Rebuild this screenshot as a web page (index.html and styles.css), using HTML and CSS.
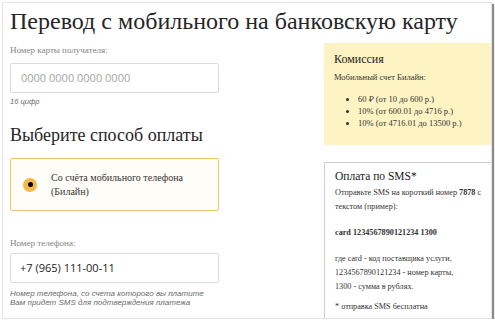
FILE: index.html
```html
<!DOCTYPE html>
<html lang="ru">
<head>
  <meta charset="utf-8">
  <title>Перевод с мобильного на банковскую карту</title>
  <link rel="stylesheet" href="styles.css">
</head>
<body>

<div class="frame">
  <h1 class="title">Перевод с мобильного на банковскую карту</h1>

  <div class="layout">
    <div class="form">
      <label class="field-label">Номер карты получателя:</label>
      <div class="input placeholder">0000 0000 0000 0000</div>
      <p class="hint">16 цифр</p>

      <h2 class="subtitle">Выберите способ оплаты</h2>
      <div class="option">
        <span class="radio"></span>
        <span class="option-text">Со счёта мобильного телефона<br>(Билайн)</span>
      </div>

      <label class="field-label phone-label">Номер телефона:</label>
      <div class="input phone">+7 (965) 111-00-11</div>
      <p class="hint phone-hint">Номер телефона, со счета которого вы платите<br>Вам придет SMS для подтверждения платежа</p>
    </div>

    <div class="side">
      <div class="box commission">
        <h3>Комиссия</h3>
        <p>Мобильный счет Билайн:</p>
        <ul>
          <li>60 ₽ (от 10 до 600 р.)</li>
          <li>10% (от 600.01 до 4716 р.)</li>
          <li>10% (от 4716.01 до 13500 р.)</li>
        </ul>
      </div>

      <div class="box sms">
        <h3>Оплата по SMS*</h3>
        <p>Отправьте SMS на короткий номер <b>7878</b> с<br>текстом (пример):</p>
        <p><b>card 1234567890121234 1300</b></p>
        <p>где card - код поставщика услуги,<br>1234567890121234 - номер карты,<br>1300 - сумма в рублях.</p>
        <p class="note">* отправка SMS бесплатна</p>
      </div>
    </div>
  </div>
</div>

</body>
</html>
```

FILE: styles.css
```css
body {
  margin: 0;
  padding: 0;
  background: #fff;
  font-family: "Liberation Serif", serif;
  color: #222;
}

.frame {
  margin: 2px 0 0 2px;
  width: 490px;
  height: 317px;
  border: 1px solid #e4e4e4;
  box-shadow: 2px 2px 1px #8c8c8c;
  overflow: hidden;
  box-sizing: border-box;
  padding: 0 0 0 7px;
}

.title {
  margin: 3px 0 0;
  font-size: 24px;
  font-weight: normal;
  line-height: 30px;
  white-space: nowrap;
  color: #262626;
}

.layout {
  display: flex;
  gap: 105px;
}

.form {
  width: 209px;
  flex: none;
}

.field-label {
  display: block;
  margin-top: 8px;
  font-size: 9px;
  line-height: 12px;
  color: #858585;
}

.phone-label {
  margin-top: 26px;
}

.input {
  margin-top: 7px;
  height: 30px;
  border: 1px solid #dcdcdc;
  border-radius: 2px;
  box-sizing: border-box;
  padding-left: 10px;
  font-family: "Open Sans", sans-serif;
  font-size: 11px;
  line-height: 28px;
  color: #1a1a1a;
}

.input.phone {
  margin-top: 4px;
  padding-left: 9px;
}

.input.placeholder {
  color: #a5a5a5;
}

.hint {
  margin: 4px 0 0;
  font-family: "Liberation Sans", sans-serif;
  font-style: italic;
  font-size: 7.5px;
  line-height: 9px;
  color: #6a6a6a;
  white-space: nowrap;
}

.phone-hint {
  margin-top: 6px;
  font-size: 8px;
  line-height: 9px;
}

.subtitle {
  margin: 17px 0 0;
  font-size: 18px;
  font-weight: normal;
  line-height: 24px;
  color: #262626;
}

.option {
  margin-top: 11px;
  height: 53px;
  border: 1px solid #f0c56e;
  border-radius: 2px;
  box-sizing: border-box;
  background: #fffdf7;
  display: flex;
  align-items: center;
  padding-left: 12px;
  gap: 14px;
}

.radio {
  flex: none;
  width: 14px;
  height: 14px;
  border-radius: 50%;
  background: #f5b94c;
  display: flex;
  align-items: center;
  justify-content: center;
}

.radio::after {
  content: "";
  width: 5px;
  height: 5px;
  border-radius: 50%;
  background: #000;
}

.option-text {
  font-size: 10px;
  line-height: 14px;
  color: #333;
}

.side {
  width: 175px;
  flex: none;
  margin-top: 7px;
}

.box {
  box-sizing: border-box;
  padding: 7px 10px 10px;
  font-size: 8.5px;
  line-height: 12px;
  color: #333;
  white-space: nowrap;
}

.box h3 {
  margin: 0;
  font-size: 12px;
  font-weight: normal;
  line-height: 18px;
  color: #222;
}

.box p {
  margin: 3px 0 0;
}

.commission {
  background: #fdf3c3;
  height: 102px;
}

.commission ul {
  margin: 10px 0 0;
  padding-left: 24px;
  font-size: 8.5px;
  line-height: 12px;
}

.sms {
  margin-top: 17px;
  border: 1px solid #cfcfcf;
  height: 160px;
  padding-top: 4px;
  font-size: 8.2px;
  line-height: 14px;
}

.sms h3 {
  font-size: 11.5px;
}

.sms p {
  margin: 12px 0 0;
}

.sms h3 + p {
  margin-top: 1px;
}

.sms .note {
  margin-top: 6px;
}
```
